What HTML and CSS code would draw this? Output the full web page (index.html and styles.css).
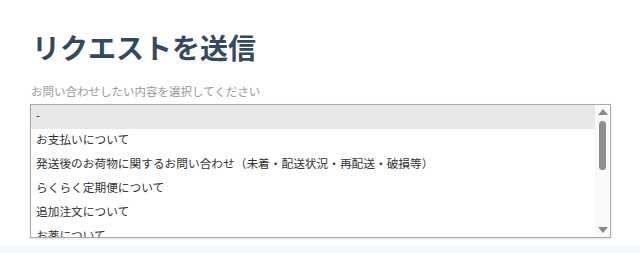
FILE: index.html
```html
<!DOCTYPE html>
<html lang="ja">
<head>
    <meta charset="utf-8">
    <title>リクエストを送信</title>
    <meta name="viewport" content="width=device-width, initial-scale=1">
    <link rel="stylesheet" href="styles.css">
</head>
<body>
    <div class="container">
        <h1>リクエストを送信</h1>

        <div class="field">
            <div class="field-label">お問い合わせしたい内容を選択してください</div>
            <div class="listbox">
                <div class="options">
                    <div class="option selected">-</div>
                    <div class="option">お支払いについて</div>
                    <div class="option">発送後のお荷物に関するお問い合わせ（未着・配送状況・再配送・破損等）</div>
                    <div class="option">らくらく定期便について</div>
                    <div class="option">追加注文について</div>
                    <div class="option">お薬について</div>
                </div>
                <div class="scrollbar">
                    <div class="arrow arrow-up"></div>
                    <div class="track">
                        <div class="thumb"></div>
                    </div>
                    <div class="arrow arrow-down"></div>
                </div>
            </div>
        </div>
    </div>
    <div class="footer-strip"></div>
</body>
</html>
```

FILE: styles.css
```css
html, body {
    height: 253px;
    overflow: hidden;
}
body {
    font-family: "Noto Sans CJK JP", "Noto Sans", sans-serif;
    margin: 0;
    background-color: #ffffff;
    color: #333333;
}
.container {
    box-sizing: border-box;
    padding: 29px 29px 0 30px;
    height: 245px;
}
h1 {
    margin: 0 0 18px 2px;
    font-size: 28px;
    line-height: 36px;
    font-weight: bold;
    color: #34495e;
}
.field-label {
    font-size: 11.5px;
    line-height: 16px;
    color: #999999;
    margin-bottom: 5px;
    padding-left: 1px;
}
.listbox {
    display: flex;
    height: 132px;
    border: 1px solid #aaaaaa;
    box-shadow: 0 1px 2px rgba(0, 0, 0, 0.12);
    background-color: #ffffff;
}
.options {
    flex: 1;
    overflow: hidden;
}
.option {
    font-size: 11.7px;
    line-height: 18px;
    height: 18px;
    padding: 1px 5px 5px 5px;
    white-space: nowrap;
    color: #333333;
}
.option.selected {
    background-color: #e8e8e8;
}
.scrollbar {
    width: 15px;
    display: flex;
    flex-direction: column;
    background-color: #f9f9f9;
}
.arrow {
    height: 14px;
    display: flex;
    justify-content: center;
    align-items: center;
}
.arrow::before {
    content: "";
    width: 0;
    height: 0;
    border-left: 5px solid transparent;
    border-right: 5px solid transparent;
}
.arrow-up::before {
    border-bottom: 6px solid #8a8a8a;
}
.arrow-down::before {
    border-top: 6px solid #8a8a8a;
}
.track {
    flex: 1;
    padding: 2px 4px;
}
.thumb {
    height: 49px;
    background-color: #8e8e8e;
    border-radius: 4px;
}
.footer-strip {
    height: 8px;
    background-color: #f4f8fb;
}
```
